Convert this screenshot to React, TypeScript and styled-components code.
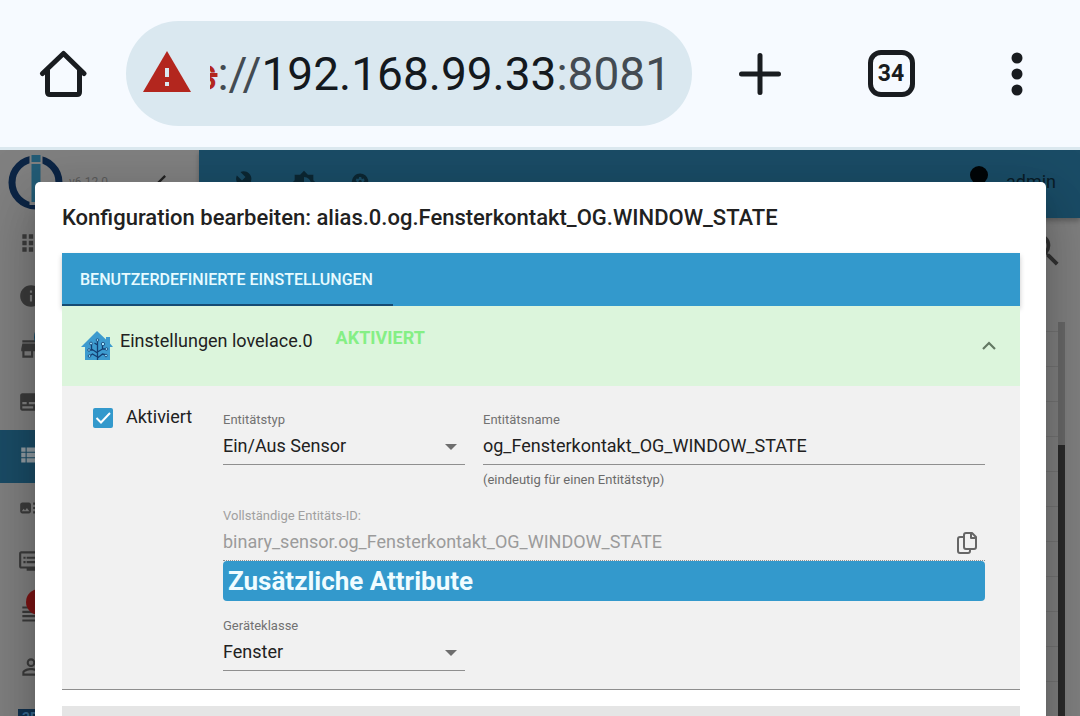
import React from "react";
import styled, { createGlobalStyle, css } from "styled-components";
import {
  MdApps, MdArtTrack, MdBrightness6, MdBuild, MdChevronLeft, MdDvr, MdInfo,
  MdPersonOutline, MdPsychology, MdSearch, MdStore, MdSubtitles, MdViewHeadline, MdViewList,
} from "react-icons/md";

const blue = "#3399cc";

const GlobalStyle = createGlobalStyle`
  *, *::before, *::after { box-sizing: border-box; }
  body { margin: 0; font-family: Roboto, "Liberation Sans", sans-serif; color: #212121; }
  button, input, select { font: inherit; color: inherit; margin: 0; padding: 0; border: 0; background: none; border-radius: 0; }
  svg { display: block; flex: none; }
`;

const Page = styled.div`
  display: flex;
  flex-direction: column;
  height: 100vh;
  overflow: hidden;
`;

/* Browser bar */
const BrowserBar = styled.header`
  display: flex;
  align-items: center;
  flex: none;
  height: 150px;
  background: #f6faff;
  border-bottom: 3px solid #dbe8ef;
  color: #191c20;
`;
const BarButton = styled.button<{ $wide?: boolean }>`
  display: flex;
  align-items: center;
  justify-content: center;
  flex: none;
  width: ${(p) => (p.$wide ? 136 : 126)}px;
  height: 100%;
`;
const AddressPill = styled.div`
  display: flex;
  align-items: center;
  flex: 1;
  min-width: 0;
  height: 105px;
  padding: 0 21px 0 17px;
  gap: 19px;
  border-radius: 53px;
  background: #dae8f0;
`;
const Url = styled.button`
  display: flex;
  justify-content: flex-end;
  flex: 1;
  min-width: 0;
  overflow: hidden;
  white-space: nowrap;
  font-size: 46px;
  line-height: 56px;
  color: #14191e;
`;
const UrlMuted = styled.span`
  color: #434b52;
`;
const UrlScheme = styled.span`
  color: #b3261e;
  text-decoration: line-through;
`;
const TabCount = styled.span`
  display: grid;
  place-items: center;
  width: 47px;
  height: 47px;
  border: 5px solid #191c20;
  border-radius: 13px;
  font-size: 23px;
  line-height: 24px;
  font-weight: 700;
`;

/* Dimmed admin page */
const Admin = styled.div`
  position: relative;
  display: flex;
  flex: 1;
  min-height: 0;
  overflow: hidden;
  background: #808080;
`;
const Sidebar = styled.nav`
  display: flex;
  flex-direction: column;
  flex: none;
  width: 199px;
`;
const SidebarHead = styled.div`
  display: flex;
  align-items: center;
  flex: none;
  gap: 6px;
  height: 68px;
  padding: 0 23px 4px 8px;
  font-size: 12px;
  color: #5b5b5b;
`;
const Version = styled.span`
  flex: 1;
`;
const MenuItem = styled.a<{ $selected?: boolean }>`
  display: flex;
  align-items: center;
  flex: none;
  height: 53px;
  padding: 0 0 3px 18px;
  color: #3c3c3c;
  ${(p) => p.$selected && css`
    background: #1a4c66;
    color: #929da3;
  `}
`;
const IconWithBadge = styled.span`
  position: relative;
`;
const Badge = styled.span<{ $red?: boolean }>`
  position: absolute;
  left: ${(p) => (p.$red ? 8 : 16)}px;
  top: -12px;
  width: 26px;
  height: 26px;
  border-radius: 50%;
  background: ${(p) => (p.$red ? "#7d1515" : "#1a4c66")};
`;
const AdapterTile = styled.span`
  width: 26px;
  height: 22px;
  padding: 2px 4px;
  background: #10314f;
  color: #3a6a90;
  font-size: 14px;
  font-weight: 700;
  line-height: 14px;
`;
const Main = styled.div`
  display: flex;
  flex-direction: column;
  flex: 1;
  min-width: 0;
`;
const AppBar = styled.div`
  display: flex;
  align-items: center;
  flex: none;
  gap: 27px;
  height: 68px;
  padding: 0 24px 0 36px;
  background: #1a4c66;
  color: #0c2733;
  box-shadow: 0 3px 5px rgba(0, 0, 0, 0.25);
`;
const User = styled.div`
  display: flex;
  align-items: center;
  gap: 18px;
  margin-left: auto;
  padding-bottom: 4px;
  font-size: 18px;
  line-height: 24px;
  color: #0a1d28;
`;
const ListToolbar = styled.div`
  display: flex;
  align-items: center;
  justify-content: flex-end;
  flex: none;
  height: 104px;
  padding: 0 15px 41px 0;
  color: #333;
`;
const ListArea = styled.div`
  display: flex;
  flex: 1;
  min-height: 0;
  padding-right: 15px;
`;
const Rows = styled.div`
  flex: 1;
  padding-top: 9px;
  overflow: hidden;
`;
const Row = styled.div`
  height: 35px;
  border-top: 1px solid #747474;
`;
const ScrollTrack = styled.div`
  width: 7px;
  padding-top: 123px;
  background: #686868;
`;
const ScrollThumb = styled.div`
  height: 100%;
  background: #2a2a2a;
`;

/* Dialog */
const Dialog = styled.section`
  position: absolute;
  inset: 32px 34px -40px 35px;
  display: flex;
  flex-direction: column;
  padding: 0 26px 0 27px;
  overflow: hidden;
  border-radius: 5px;
  background: #fff;
  box-shadow: 0 14px 20px -9px rgba(0, 0, 0, 0.2), 0 32px 50px 4px rgba(0, 0, 0, 0.14),
    0 12px 60px 10px rgba(0, 0, 0, 0.12);
`;
const DialogTitle = styled.h2`
  flex: none;
  margin: 0;
  font-size: 22px;
  font-weight: 500;
  line-height: 71px;
  white-space: nowrap;
`;
const Tabs = styled.div`
  display: flex;
  flex: none;
  height: 53px;
  background: ${blue};
  box-shadow: 0 3px 5px rgba(0, 0, 0, 0.22);
`;
const Tab = styled.button`
  padding: 2px 20px 0 18px;
  border-bottom: 2px solid #164b73;
  font-size: 16px;
  font-weight: 500;
  color: #e8fbff;
`;
const AccordionHead = styled.div`
  display: flex;
  align-items: center;
  position: relative;
  flex: none;
  height: 80px;
  padding: 0 20px 0 19px;
  background: #dcf5dc;
  font-size: 18px;
  line-height: 24px;
`;
const AccordionTitle = styled.span`
  margin: 0 23px 10px 7px;
`;
const Status = styled.span`
  margin-bottom: 16px;
  font-weight: 700;
  color: #85ef85;
`;
const CollapseButton = styled.button`
  margin-left: auto;
`;
const AccordionBody = styled.div`
  display: grid;
  grid-template-columns: 130px minmax(0, 1fr);
  flex: none;
  padding: 20px 35px 18px 31px;
  background: #f1f1f1;
  border-bottom: 1px solid #8e8e8e;
`;
const CheckLabel = styled.label`
  display: flex;
  align-items: flex-start;
  gap: 13px;
  font-size: 18px;
  line-height: 22px;
`;
const CheckBox = styled.span`
  display: grid;
  padding-top: 2px;
  > * { grid-area: 1 / 1; }
  svg { pointer-events: none; }
`;
const CheckInput = styled.input`
  appearance: none;
  width: 20px;
  height: 20px;
  border-radius: 2px;
  background: ${blue};
`;
const Fields = styled.div`
  padding-top: 6px;
`;
const FieldRow = styled.div`
  display: flex;
  gap: 18px;
  margin-bottom: 20px;
`;
const Field = styled.div<{ $narrow?: boolean; $muted?: boolean }>`
  display: flex;
  flex-direction: column;
  ${(p) => (p.$narrow ? "width: 242px; flex: none;" : "flex: 1; min-width: 0;")}
  color: ${(p) => (p.$muted ? "#9b9b9b" : "#212121")};
`;
const FieldLabel = styled.label<{ $muted?: boolean }>`
  font-size: 13px;
  line-height: 16px;
  color: ${(p) => (p.$muted ? "#a0a0a0" : "#727272")};
`;
const Control = styled.div<{ $dotted?: boolean }>`
  display: flex;
  align-items: center;
  height: 37px;
  padding: 2px 8px 0 0;
  border-bottom: 1px ${(p) => (p.$dotted ? "dotted" : "solid")} #8f8f8f;
`;
const valueText = css`
  flex: 1;
  align-self: flex-start;
  min-width: 0;
  height: 30px;
  font-size: 18px;
  outline: none;
`;
const TextInput = styled.input`
  ${valueText}
`;
const Select = styled.select`
  ${valueText}
  appearance: none;
`;
const Helper = styled.span`
  margin-top: 7px;
  font-size: 13px;
  line-height: 16px;
  color: #6b6b6b;
`;
const SectionTitle = styled.h3`
  margin: 0 0 17px;
  padding: 0 5px;
  border-radius: 4px;
  background: ${blue};
  color: #f0fcff;
  font-size: 26px;
  font-weight: 700;
  line-height: 40px;
`;
const NextPanel = styled.div`
  flex: 1;
  margin-top: 16px;
  background: #e5e5e5;
`;

const HomeIcon = () => (
  <svg width="48" height="48" viewBox="0 0 48 48" fill="none" stroke="currentColor" strokeWidth="5" strokeLinecap="round" strokeLinejoin="round">
    <path d="M8.500 20v22q0 2.500 2.500 2.500h27q2.500 0 2.500-2.500V20M3.500 23.500 24.500 3.500 45 23.500" />
  </svg>
);
const WarningIcon = () => (
  <svg width="48" height="46" viewBox="0 0 48 46">
    <path d="M24 0 48 41H0z" fill="#b3261e" />
    <path d="M22 17h4v9h-4zM22 31h4v4h-4z" fill="#dae8f0" />
  </svg>
);
const PlusIcon = () => (
  <svg width="42" height="42" viewBox="0 0 42 42" stroke="currentColor" strokeWidth="5" strokeLinecap="round">
    <path d="M21 2.500v37M2.500 21h37" />
  </svg>
);
const DotsIcon = () => (
  <svg width="12" height="44" viewBox="0 0 12 44" fill="currentColor">
    <circle cx="6" cy="6" r="5.500" /><circle cx="6" cy="22" r="5.500" /><circle cx="6" cy="38" r="5.500" />
  </svg>
);
const Logo = () => (
  <svg width="55" height="55" viewBox="0 0 55 55">
    <circle cx="27.500" cy="27.500" r="23.500" fill="none" stroke="#0c2545" strokeWidth="7" />
    <path d="M21.500 0h13v50h-13z" fill="#808080" />
    <path d="M23.500 0h9v7h-9zM23.500 9h9v38h-9z" fill="#235c76" />
  </svg>
);
const LovelaceIcon = () => (
  <svg width="32" height="30" viewBox="0 0 32 30">
    <path d="M16 0 25 8.500V6h4v6.500L32 16h-3v13H4V16H0z" fill="#3d9bcf" />
    <g fill="none" stroke="#143f73" strokeWidth="1.300">
      <path d="M16.500 29V9M16.500 26l-5-3-3 2M16.500 22l-6-4v-5M16.500 27l5-4 4 1M16.500 21l5-3v-5M12 19H8M21 18h4M16.500 14l-3-2" />
    </g>
    <g fill="#9fe6ff" stroke="#143f73" strokeWidth="0.800">
      <circle cx="10" cy="12.500" r="1.400" /><circle cx="8" cy="19" r="1.300" /><circle cx="16.500" cy="9" r="1.300" />
      <circle cx="22" cy="13" r="1.700" /><circle cx="25.500" cy="18" r="1.300" /><circle cx="8.500" cy="25" r="1.300" /><circle cx="25" cy="24.500" r="1.300" />
    </g>
  </svg>
);
const ChevronUp = () => (
  <svg width="22" height="22" viewBox="0 0 22 22" fill="none" stroke="#637963" strokeWidth="2.200">
    <path d="m5 14 6-6 6 6" />
  </svg>
);
const CheckMark = () => (
  <svg width="20" height="20" viewBox="0 0 20 20" fill="none" stroke="#fff" strokeWidth="2">
    <path d="m3.500 10 4.500 4.500 9-9.500" />
  </svg>
);
const Arrow = () => (
  <svg width="12" height="6" viewBox="0 0 12 6" fill="#6e6e6e"><path d="M0 0h12L6 6z" /></svg>
);
const CopyIcon = () => (
  <svg width="20" height="22" viewBox="0 0 20 22" fill="none" stroke="#666" strokeWidth="2" strokeLinejoin="round">
    <path d="M7 5H3Q1 5 1 7v12q0 2 2 2h8q2 0 2-2v-2" />
    <path d="M9 1h6l4 4v10q0 2-2 2H9q-2 0-2-2V3q0-2 2-2zM14 1v5h5" />
  </svg>
);

type SelectFieldProps = { id: string; label: string; value: string };
const SelectField = ({ id, label, value }: SelectFieldProps) => (
  <Field $narrow>
    <FieldLabel htmlFor={id}>{label}</FieldLabel>
    <Control>
      <Select id={id} defaultValue={value}><option>{value}</option></Select>
      <Arrow />
    </Control>
  </Field>
);

const menu = [
  { name: "Übersicht", Icon: MdApps },
  { name: "Info", Icon: MdInfo },
  { name: "Adapter", Icon: MdStore, badge: "blue" },
  { name: "Instanzen", Icon: MdSubtitles },
  { name: "Objekte", Icon: MdViewList, selected: true },
  { name: "Aufzählungen", Icon: MdArtTrack },
  { name: "Hosts", Icon: MdDvr },
  { name: "Protokolle", Icon: MdViewHeadline, badge: "red" },
  { name: "Benutzer", Icon: MdPersonOutline },
];

export default function App() {
  return (
    <Page>
      <GlobalStyle />
      <BrowserBar>
        <BarButton aria-label="Startseite"><HomeIcon /></BarButton>
        <AddressPill>
          <WarningIcon />
          <Url>
            <UrlScheme>https</UrlScheme><UrlMuted>://</UrlMuted>192.168.99.33<UrlMuted>:8081</UrlMuted>
          </Url>
        </AddressPill>
        <BarButton $wide aria-label="Neuer Tab"><PlusIcon /></BarButton>
        <BarButton><TabCount>34</TabCount></BarButton>
        <BarButton aria-label="Menü"><DotsIcon /></BarButton>
      </BrowserBar>

      <Admin>
        <Sidebar>
          <SidebarHead><Logo /><Version>v6.12.0</Version><MdChevronLeft size={28} color="#222" /></SidebarHead>
          {menu.map(({ name, Icon, badge, selected }) => (
            <MenuItem key={name} href="#" aria-label={name} $selected={selected}>
              <IconWithBadge>
                {badge === "blue" && <Badge />}
                <Icon size={26} />
                {badge === "red" && <Badge $red />}
              </IconWithBadge>
            </MenuItem>
          ))}
          <MenuItem href="#" aria-label="3D"><AdapterTile>3D</AdapterTile></MenuItem>
        </Sidebar>
        <Main>
          <AppBar>
            <MdBuild size={28} /><MdBrightness6 size={28} /><MdPsychology size={28} />
            <User>
              <svg width="18" height="32" viewBox="0 0 18 32"><circle cx="9" cy="9" r="9" fill="#020608" /></svg>
              admin
            </User>
          </AppBar>
          <ListToolbar><MdSearch size={44} /></ListToolbar>
          <ListArea>
            <Rows>{Array.from({ length: 11 }, (_, i) => <Row key={i} />)}</Rows>
            <ScrollTrack><ScrollThumb /></ScrollTrack>
          </ListArea>
        </Main>

        <Dialog role="dialog" aria-labelledby="dialog-title">
          <DialogTitle id="dialog-title">Konfiguration bearbeiten: alias.0.og.Fensterkontakt_OG.WINDOW_STATE</DialogTitle>
          <Tabs><Tab>BENUTZERDEFINIERTE EINSTELLUNGEN</Tab></Tabs>
          <AccordionHead>
            <LovelaceIcon />
            <AccordionTitle>Einstellungen lovelace.0</AccordionTitle>
            <Status>AKTIVIERT</Status>
            <CollapseButton aria-label="Einklappen"><ChevronUp /></CollapseButton>
          </AccordionHead>
          <AccordionBody>
            <CheckLabel>
              <CheckBox><CheckInput type="checkbox" defaultChecked /><CheckMark /></CheckBox>
              Aktiviert
            </CheckLabel>
            <Fields>
              <FieldRow>
                <SelectField id="type" label="Entitätstyp" value="Ein/Aus Sensor" />
                <Field>
                  <FieldLabel htmlFor="name">Entitätsname</FieldLabel>
                  <Control><TextInput id="name" defaultValue="og_Fensterkontakt_OG_WINDOW_STATE" /></Control>
                  <Helper>(eindeutig für einen Entitätstyp)</Helper>
                </Field>
              </FieldRow>
              <Field $muted>
                <FieldLabel $muted htmlFor="full-id">Vollständige Entitäts-ID:</FieldLabel>
                <Control $dotted>
                  <TextInput id="full-id" disabled defaultValue="binary_sensor.og_Fensterkontakt_OG_WINDOW_STATE" />
                  <button aria-label="Kopieren"><CopyIcon /></button>
                </Control>
              </Field>
              <SectionTitle>Zusätzliche Attribute</SectionTitle>
              <SelectField id="class" label="Geräteklasse" value="Fenster" />
            </Fields>
          </AccordionBody>
          <NextPanel />
        </Dialog>
      </Admin>
    </Page>
  );
}
